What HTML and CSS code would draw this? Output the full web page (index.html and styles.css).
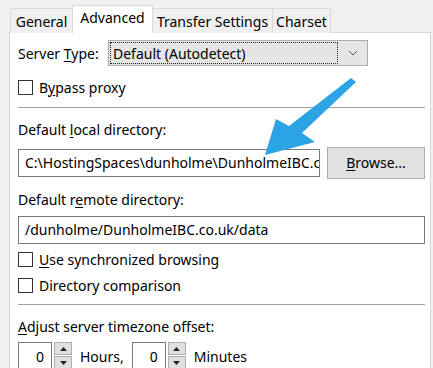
FILE: index.html
```html
<!DOCTYPE html>
<html lang="en">
<head>
  <meta charset="UTF-8">
  <link rel="stylesheet" href="styles.css">
</head>
<body>

<div class="tabs">
  <div class="tab">General</div>
  <div class="tab active">Advanced</div>
  <div class="tab">Transfer Settings</div>
  <div class="tab">Charset</div>
</div>

<div class="panel">
  <div class="row">
    <span class="label-fixed">Server <u>T</u>ype:</span>
    <div class="select">
      <div class="select-value">Default (Autodetect)</div>
      <svg class="chevron" width="10" height="6" viewBox="0 0 10 6"><path d="M1 1 L5 5 L9 1" fill="none" stroke="#555" stroke-width="1"/></svg>
    </div>
  </div>

  <div class="check first">
    <span class="box"></span><span>B<u>y</u>pass proxy</span>
  </div>

  <div class="sep"></div>

  <div class="label l1">Default <u>l</u>ocal directory:</div>
  <div class="row browse-row">
    <div class="input short">C:\HostingSpaces\dunholme\DunholmeIBC.co</div>
    <div class="button"><u>B</u>rowse...</div>
  </div>

  <div class="label l2">Default r<u>e</u>mote directory:</div>
  <div class="input wide">/dunholme/DunholmeIBC.co.uk/data</div>

  <div class="check c1">
    <span class="box"></span><span><u>U</u>se synchronized browsing</span>
  </div>
  <div class="check c2">
    <span class="box"></span><span>Directory comparison</span>
  </div>

  <div class="sep s2"></div>

  <div class="label l3"><u>A</u>djust server timezone offset:</div>
  <div class="row spin-row">
    <div class="spin-input">0</div>
    <div class="spin-buttons">
      <div class="spin-btn"><svg width="7" height="4" viewBox="0 0 7 4"><path d="M0 4 L3.5 0 L7 4 Z" fill="#222"/></svg></div>
      <div class="spin-btn"><svg width="7" height="4" viewBox="0 0 7 4"><path d="M0 0 L3.5 4 L7 0 Z" fill="#222"/></svg></div>
    </div>
    <span class="unit">Hours,</span>
    <div class="spin-input">0</div>
    <div class="spin-buttons">
      <div class="spin-btn"><svg width="7" height="4" viewBox="0 0 7 4"><path d="M0 4 L3.5 0 L7 4 Z" fill="#222"/></svg></div>
      <div class="spin-btn"><svg width="7" height="4" viewBox="0 0 7 4"><path d="M0 0 L3.5 4 L7 0 Z" fill="#222"/></svg></div>
    </div>
    <span class="unit">Minutes</span>
  </div>

  <svg class="arrow" width="100" height="90" viewBox="258 72 100 90">
    <polygon points="350,78 355,82 301,133 314,142 264,155 275,119 288,126" fill="#2ca3e5"/>
  </svg>
</div>

</body>
</html>
```

FILE: styles.css
```css
body {
  margin: 0;
  background: #f0f0f0;
  font-family: "Noto Sans", "Open Sans", sans-serif;
  font-size: 14px;
  color: #000;
  height: 368px;
  overflow: hidden;
}

u {
  text-decoration-thickness: 1px;
  text-underline-offset: 2px;
}

.tabs {
  display: flex;
  align-items: flex-end;
  margin-left: 10px;
  padding-top: 5px;
  height: 28px;
  position: relative;
  z-index: 1;
}

.tab {
  height: 25px;
  line-height: 25px;
  padding: 0;
  border: 1px solid #d9d9d9;
  border-bottom: none;
  border-right: none;
  background: #f0f0f0;
  box-sizing: border-box;
  text-align: center;
  white-space: nowrap;
}

.tab:nth-child(1) { width: 62px; }
.tab:nth-child(2) { width: 81px; }
.tab:nth-child(3) { width: 120px; }
.tab:nth-child(4) { width: 59px; border-right: 1px solid #d9d9d9; }

.tab.active {
  height: 28px;
  line-height: 24px;
  background: #fff;
  border-right: 1px solid #d9d9d9;
  margin-right: -1px;
}

.panel {
  position: relative;
  margin-left: 9px;
  margin-right: 2px;
  margin-top: -1px;
  height: 340px;
  background: #fff;
  border: 1px solid #d9d9d9;
  border-bottom: none;
  padding: 7px 5px 0 8px;
  box-sizing: border-box;
}

.row {
  display: flex;
  align-items: center;
}

.label-fixed {
  width: 90px;
}

.select {
  display: flex;
  align-items: center;
  width: 260px;
  height: 26px;
  box-sizing: border-box;
  background: #e5e5e5;
  border: 1px solid #adadad;
  padding: 1px;
}

.select-value {
  flex: 1;
  height: 22px;
  line-height: 21px;
  padding-left: 2px;
  border: 1px dotted #222;
  box-sizing: border-box;
  margin-right: 10px;
}

.chevron {
  margin-right: 8px;
}

.check {
  display: flex;
  align-items: center;
  height: 20px;
}

.box {
  width: 15px;
  height: 15px;
  border: 1px solid #333;
  box-sizing: border-box;
  background: #fff;
  margin-right: 6px;
}

.check.first { margin-top: 11px; }
.check.c1 { margin-top: 5px; }
.check.c2 { margin-top: 6px; }

.sep {
  height: 1px;
  background: #a0a0a0;
  margin-top: 10px;
}

.sep.s2 { margin-top: 9px; }

.label {
  height: 20px;
  line-height: 20px;
}

.label.l1 { margin-top: 12px; }
.label.l2 { margin-top: 11px; }
.label.l3 { margin-top: 12px; }

.browse-row {
  margin-top: 7px;
  height: 32px;
}

.input {
  height: 28px;
  line-height: 26px;
  border: 1px solid #7a7a7a;
  box-sizing: border-box;
  padding-left: 6px;
  white-space: nowrap;
  overflow: hidden;
  background: #fff;
}

.input.short {
  width: 302px;
}

.input.wide {
  margin-top: 6px;
}

.button {
  margin-left: 7px;
  width: 98px;
  height: 32px;
  line-height: 30px;
  box-sizing: border-box;
  background: #e1e1e1;
  border: 1px solid #adadad;
  text-align: center;
}

.spin-row {
  margin-top: 5px;
  align-items: flex-start;
}

.spin-input {
  width: 34px;
  height: 30px;
  line-height: 28px;
  border: 1px solid #7a7a7a;
  box-sizing: border-box;
  text-align: right;
  padding-right: 7px;
}

.spin-buttons {
  margin-left: 2px;
  width: 18px;
  display: flex;
  flex-direction: column;
  gap: 1px;
}

.spin-btn {
  height: 13px;
  background: #e1e1e1;
  border: 1px solid #adadad;
  box-sizing: border-box;
  display: flex;
  align-items: center;
  justify-content: center;
}

.unit {
  margin-left: 8px;
  margin-right: 8px;
  line-height: 30px;
}

.arrow {
  position: absolute;
  left: 249px;
  top: 39px;
}
```
